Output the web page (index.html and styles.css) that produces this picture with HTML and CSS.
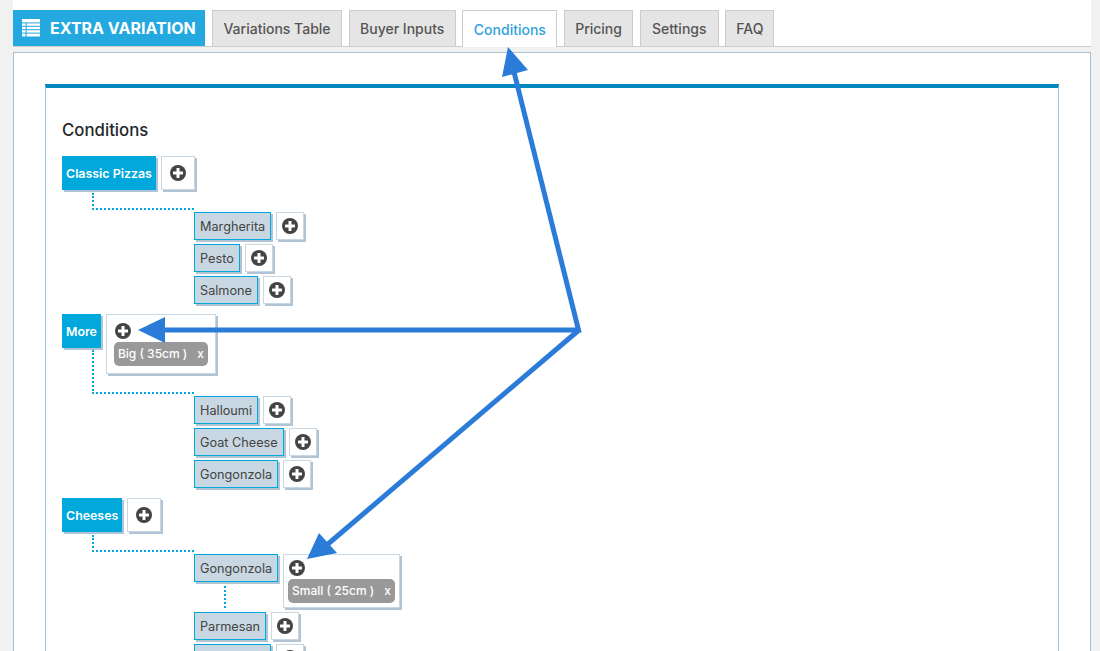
FILE: index.html
```html
<!DOCTYPE html>
<html lang="en">
<head>
<meta charset="utf-8">
<title>Extra Variation – Conditions</title>
<link rel="stylesheet" href="styles.css">
</head>
<body>
<svg class="defs" width="0" height="0" aria-hidden="true">
  <symbol id="plus" viewBox="0 0 16 16">
    <circle cx="8" cy="8" r="8" fill="#444"/>
    <rect x="3" y="6.5" width="10" height="3" rx=".4" fill="#fff"/>
    <rect x="6.5" y="3" width="3" height="10" rx=".4" fill="#fff"/>
  </symbol>
</svg>
<div class="page">
  <header class="tabs">
    <div class="brand">
      <svg class="brand-icon" width="18" height="18" viewBox="0 0 18 18">
        <rect x="0" y="0" width="18" height="3.4" fill="#fff"/>
        <rect x="0" y="4.4" width="3.6" height="2.4" fill="#fff"/><rect x="4.6" y="4.4" width="13.4" height="2.4" fill="#fff"/>
        <rect x="0" y="7.8" width="3.6" height="2.4" fill="#fff"/><rect x="4.6" y="7.8" width="13.4" height="2.4" fill="#fff"/>
        <rect x="0" y="11.2" width="3.6" height="2.4" fill="#fff"/><rect x="4.6" y="11.2" width="13.4" height="2.4" fill="#fff"/>
        <rect x="0" y="14.6" width="3.6" height="2.9" fill="#fff"/><rect x="4.6" y="14.6" width="13.4" height="2.9" fill="#fff"/>
      </svg>
      <span>EXTRA VARIATION</span>
    </div>
    <nav class="tab-list">
      <a class="tab">Variations Table</a>
      <a class="tab">Buyer Inputs</a>
      <a class="tab tab-active">Conditions</a>
      <a class="tab">Pricing</a>
      <a class="tab">Settings</a>
      <a class="tab">FAQ</a>
    </nav>
  </header>

  <main class="panel">
    <section class="card">
      <h2 class="title">Conditions</h2>

      <div class="group">
        <div class="row">
          <div class="parent">Classic Pizzas</div>
          <button class="add add-parent"><svg width="16" height="16"><use href="#plus"/></svg></button>
        </div>
        <div class="link"></div>
        <div class="children">
          <div class="row">
            <div class="child">Margherita</div>
            <button class="add add-child"><svg width="16" height="16"><use href="#plus"/></svg></button>
          </div>
          <div class="row">
            <div class="child">Pesto</div>
            <button class="add add-child"><svg width="16" height="16"><use href="#plus"/></svg></button>
          </div>
          <div class="row">
            <div class="child">Salmone</div>
            <button class="add add-child"><svg width="16" height="16"><use href="#plus"/></svg></button>
          </div>
        </div>
      </div>

      <div class="group">
        <div class="row">
          <div class="parent">More</div>
          <div class="rule rule-wide">
            <svg class="rule-icon" width="16" height="16"><use href="#plus"/></svg>
            <div class="badge"><span>Big ( 35cm )</span><span>x</span></div>
          </div>
        </div>
        <div class="link link-tall"></div>
        <div class="children">
          <div class="row">
            <div class="child">Halloumi</div>
            <button class="add add-child"><svg width="16" height="16"><use href="#plus"/></svg></button>
          </div>
          <div class="row">
            <div class="child">Goat Cheese</div>
            <button class="add add-child"><svg width="16" height="16"><use href="#plus"/></svg></button>
          </div>
          <div class="row">
            <div class="child">Gongonzola</div>
            <button class="add add-child"><svg width="16" height="16"><use href="#plus"/></svg></button>
          </div>
        </div>
      </div>

      <div class="group">
        <div class="row">
          <div class="parent">Cheeses</div>
          <button class="add add-parent"><svg width="16" height="16"><use href="#plus"/></svg></button>
        </div>
        <div class="link"></div>
        <div class="children">
          <div class="row">
            <div class="child-col">
              <div class="child">Gongonzola</div>
              <div class="link-short"></div>
            </div>
            <div class="rule rule-tight">
              <svg class="rule-icon" width="16" height="16"><use href="#plus"/></svg>
              <div class="badge"><span>Small ( 25cm )</span><span>x</span></div>
            </div>
          </div>
          <div class="row">
            <div class="child">Parmesan</div>
            <button class="add add-child"><svg width="16" height="16"><use href="#plus"/></svg></button>
          </div>
          <div class="row">
            <div class="child child-clipped"></div>
            <button class="add add-child"><svg width="16" height="16"><use href="#plus"/></svg></button>
          </div>
        </div>
      </div>
    </section>
  </main>
</div>

<svg class="arrows" width="1100" height="651" viewBox="0 0 1100 651" aria-hidden="true">
  <g fill="none" stroke="#2b7cd9" stroke-width="5" stroke-linejoin="miter">
    <polyline points="514,72 578.5,330 160,330"/>
    <line x1="579" y1="330" x2="328" y2="544"/>
  </g>
  <g fill="#2b7cd9">
    <polygon points="508,47 502,77 528,70"/>
    <polygon points="138,330 165,317 165,343"/>
    <polygon points="307,559 319,533 337,553"/>
  </g>
</svg>
</body>
</html>
```

FILE: styles.css
```css
* { box-sizing: border-box; }

html, body {
  margin: 0;
  height: 651px;
  overflow: hidden;
}

body {
  position: relative;
  background: #f1f1f1;
  font-family: Inter, Roboto, "Liberation Sans", sans-serif;
  color: #444;
}

.defs { position: absolute; }

.page {
  margin: 0 9px 0 13px;
}

/* Header */
.tabs {
  display: flex;
  align-items: stretch;
  gap: 7px;
  height: 47px;
  padding-top: 10px;
  background: #fff;
  border-bottom: 1px solid #ccc;
}

.brand {
  display: flex;
  align-items: center;
  width: 192px;
  padding-left: 9px;
  gap: 10px;
  background: #24a8e0;
  color: #fff;
  font-size: 16px;
  font-weight: 700;
  white-space: nowrap;
}

.brand-icon { flex: none; }

.tab-list {
  display: grid;
  grid-template-columns: 130px 107px 95px 69px 79px 49px;
  column-gap: 6.7px;
}

.tab {
  display: flex;
  align-items: center;
  justify-content: center;
  background: #e5e5e5;
  border: 1px solid #ccc;
  border-bottom: 0;
  color: #555;
  font-size: 14px;
  font-weight: 500;
  white-space: nowrap;
}

.tab-active {
  margin-bottom: -1px;
  background: #fff;
  color: #2ea2dd;
}

/* Panel */
.panel {
  margin-top: 5px;
  height: 700px;
  padding: 31px 31px 0;
  background: #fff;
  border: 1px solid #a9c3d6;
}

.card {
  height: 100%;
  padding: 0 16px;
  border: 1px solid #a9c3d6;
  border-top: 4px solid #0088bf;
}

.title {
  margin: 0;
  padding-top: 33px;
  height: 68px;
  font-size: 16.8px;
  line-height: 19px;
  font-weight: 500;
  color: #23282d;
}

/* Tree */
.group { margin-bottom: 10px; }

.row {
  display: flex;
  align-items: flex-start;
  gap: 5px;
}

.parent {
  display: flex;
  align-items: center;
  height: 34px;
  padding: 0 4px;
  background: #00a8dc;
  color: #fff;
  font-size: 12.4px;
  font-weight: 600;
  white-space: nowrap;
  box-shadow: 2px 2px 0 #b0c4d6;
}

.add, .rule {
  background: #fff;
  border: 1px solid #c8d7e1;
  box-shadow: 2px 2px 0 #b0c4d6;
}

.add {
  display: flex;
  align-items: center;
  justify-content: center;
  padding: 0;
}

.add-parent { width: 34px; height: 34px; }
.add-child { width: 28px; height: 28px; }

.rule { display: flex; flex-direction: column; align-items: flex-start; }
.rule-wide { padding: 8px 7px 7px; height: 60px; }
.rule-tight { padding: 5px 4px 4px; height: 54px; }

.rule-icon { margin: 0 0 3px 1px; display: block; }

.badge {
  display: flex;
  gap: 10px;
  align-items: center;
  height: 24px;
  padding: 0 4px 1px;
  background: #999;
  border-radius: 5px;
  color: #fff;
  font-size: 12px;
  font-weight: 500;
  white-space: nowrap;
}

.link {
  width: 102px;
  height: 17px;
  margin: 3px 0 2px 30px;
  border-left: 2px dotted #00a8dc;
  border-bottom: 2px dotted #00a8dc;
}

.link-tall {
  height: 44px;
  margin-top: -24px;
}

.children {
  display: flex;
  flex-direction: column;
  gap: 4px;
  margin-left: 132px;
}

.child {
  display: flex;
  align-items: center;
  height: 28px;
  padding: 0 5px;
  background: #c8d7e1;
  border: 1px solid #00a8dc;
  color: #444;
  font-size: 12.7px;
  white-space: nowrap;
  box-shadow: 2px 2px 0 #b0c4d6;
}

.child-clipped { width: 77px; }

.child-col {
  display: flex;
  flex-direction: column;
}

.link-short {
  width: 0;
  height: 22px;
  margin: 4px 0 0 30px;
  border-left: 2px dotted #00a8dc;
}

/* Annotation arrows drawn on top of the screenshot */
.arrows {
  position: absolute;
  top: 0;
  left: 0;
  pointer-events: none;
}
```
